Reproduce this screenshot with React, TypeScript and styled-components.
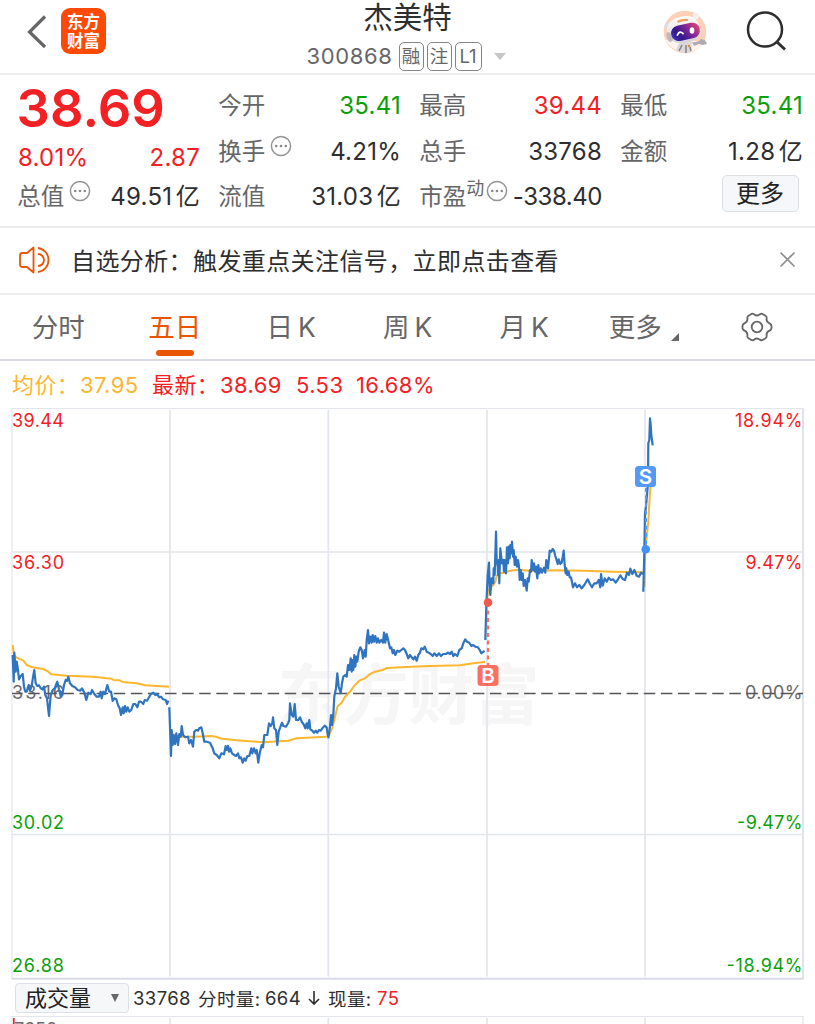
import React from "react";
import styled, { createGlobalStyle } from "styled-components";

const RED = "#f32024";
const GREEN = "#0aa00a";
const INK = "#2e2e30";
const GREY = "#666668";
const ORANGE = "#ea5504";
const LINE = "#2f74c0";
const AVG = "#fdb62f";
const GRID = "#e3e5ed";

const FONT = `Inter, "Noto Sans CJK SC", sans-serif`;

const Global = createGlobalStyle`
  * { box-sizing: border-box; }
  html, body { margin: 0; background: #fff; }
  body { font-family: ${FONT}; color: ${INK}; overflow: hidden; }
`;

const Page = styled.main`
  width: 815px;
  height: 1024px;
  overflow: hidden;
  display: flex;
  flex-direction: column;
  background: #fff;
`;

const Header = styled.header`
  height: 75px;
  flex: none;
  display: grid;
  grid-template-columns: 240px 1fr 240px;
  border-bottom: 2px solid #ededee;
`;

const HeaderLeft = styled.div`
  display: flex;
  align-items: flex-start;
  padding: 8px 0 0 26px;
  gap: 13px;
`;

const Logo = styled.div`
  width: 45px;
  height: 46px;
  border-radius: 9px;
  background: #ff4a03;
  color: #fff;
  font: 700 16.5px/19px "Noto Sans CJK SC", sans-serif;
  display: flex;
  flex-direction: column;
  align-items: center;
  justify-content: center;
`;

const Titles = styled.div`
  display: flex;
  flex-direction: column;
  align-items: center;
`;

const Title = styled.h1`
  margin: 0;
  font-size: 29.5px;
  line-height: 34px;
  font-weight: 400;
  height: 40px;
`;

const CodeRow = styled.div`
  display: flex;
  align-items: center;
  height: 32px;
  gap: 3px;
  margin-left: -3px;
  color: ${GREY};
`;

const Code = styled.span`
  font-size: 22px;
  letter-spacing: 0.65px;
  margin-right: 3px;
`;

const Badge = styled.span<{ $w?: number }>`
  width: ${(p) => p.$w ?? 25}px;
  height: 29px;
  border: 1.5px solid #858587;
  border-radius: 5px;
  font-size: 18.5px;
  line-height: 26px;
  text-align: center;
`;

const Caret = styled.span`
  border: 6.5px solid transparent;
  border-top: 7px solid #c6c6c8;
  border-bottom: 0;
  margin-left: 9px;
`;

const HeaderRight = styled.div`
  display: flex;
  justify-content: flex-end;
  align-items: flex-start;
  gap: 38px;
  padding: 9px 27px 0 0;
`;

const Quote = styled.section`
  height: 153px;
  flex: none;
  display: grid;
  grid-template-columns: repeat(4, 182px);
  column-gap: 19px;
  padding: 8px 0 0 18px;
  border-bottom: 2px solid #ededee;
`;

const Column = styled.div`
  display: flex;
  flex-direction: column;
`;

const Price = styled.div`
  height: 52px;
  margin-left: -1.5px;
  font-size: 52.5px;
  line-height: 51px;
  font-weight: 600;
  color: ${RED};
`;

const Row = styled.div<{ $h?: number }>`
  height: ${(p) => p.$h ?? 45.7}px;
  display: flex;
  align-items: center;
  justify-content: space-between;
  font-size: 24px;
  line-height: 36px;
  white-space: nowrap;
`;

const Label = styled.span`
  display: flex;
  color: ${GREY};
  font-size: 23.5px;
  margin-left: -0.7px;
`;

const Value = styled.span<{ $color?: string; $tracking?: number }>`
  color: ${(p) => p.$color ?? INK};
  letter-spacing: ${(p) => p.$tracking ?? 0.25}px;
`;

const Unit = styled.span`
  margin-left: 3.5px;
`;

const Super = styled.sup`
  font-size: 18px;
  line-height: 20px;
  margin-right: -3px;
`;

const MoreButton = styled.button`
  width: 77px;
  height: 37px;
  margin: 1px 4.5px 0 auto;
  padding: 0;
  border: 1.5px solid #dcdfe4;
  border-radius: 5px;
  background: #f6f7f9;
  font: 400 24px/34px ${FONT};
  color: #222;
`;

const Notice = styled.section`
  height: 67px;
  flex: none;
  display: flex;
  align-items: center;
  padding: 0 19px 2px 18px;
  border-bottom: 2px solid #ededee;
`;

const NoticeText = styled.span`
  flex: 1;
  margin-left: 20px;
  font: 400 24px/34px "Noto Sans CJK SC", sans-serif;
  letter-spacing: 0.4px;
`;

const Tabs = styled.nav`
  height: 66px;
  flex: none;
  display: grid;
  grid-template-columns: repeat(7, 116.5px);
  border-bottom: 2px solid #d8dbe3;
`;

const Tab = styled.div<{ $active?: boolean; $shift?: number }>`
  position: relative;
  display: flex;
  align-items: center;
  justify-content: center;
  gap: 5px;
  padding-left: ${(p) => p.$shift ?? 0}px;
  font-size: 26.5px;
  line-height: 36px;
  color: ${(p) => (p.$active ? ORANGE : GREY)};
  &::after {
    content: "";
    display: ${(p) => (p.$active ? "block" : "none")};
    position: absolute;
    bottom: 3px;
    width: 38px;
    height: 6px;
    border-radius: 3px;
    background: ${ORANGE};
  }
`;

const Corner = styled.i`
  align-self: flex-end;
  margin: 0 0 18px 4px;
  border-left: 8px solid transparent;
  border-bottom: 8px solid #666;
`;

const Legend = styled.div`
  height: 47px;
  flex: none;
  display: flex;
  align-items: center;
  padding-left: 12px;
`;

const LegendItem = styled.span<{ $w: number; $color: string }>`
  width: ${(p) => p.$w}px;
  color: ${(p) => p.$color};
  font-size: 22px;
  line-height: 32px;
  letter-spacing: 0.4px;
  white-space: nowrap;
`;

const Chart = styled.svg`
  display: block;
  flex: none;
  width: 815px;
  height: 572px;
`;

const VolumeBar = styled.div`
  height: 36px;
  flex: none;
  display: flex;
  align-items: center;
  padding-left: 15px;
  font-size: 18.5px;
  white-space: nowrap;
`;

const Picker = styled.button`
  width: 114px;
  height: 30px;
  border: 1.5px solid #dcdfe4;
  border-radius: 4px;
  background: #f6f7f9;
  display: flex;
  align-items: center;
  justify-content: space-between;
  padding: 0 9px;
  margin-right: 4px;
  font: 400 22px/26px ${FONT};
  color: #222;
`;

const PickerCaret = styled.i`
  border: 4.5px solid transparent;
  border-top: 8px solid #666;
  border-bottom: 0;
`;

const Stat = styled.span<{ $w: number; $color?: string }>`
  width: ${(p) => p.$w}px;
  color: ${(p) => p.$color ?? INK};
  letter-spacing: 0.4px;
`;

const ArrowDown = styled.svg`
  display: block;
  width: 14px;
  height: 16px;
  margin-right: 7px;
`;

const VolumeChart = styled.svg`
  display: block;
  flex: none;
  width: 815px;
  height: 8px;
`;

const DotsIcon = styled.svg`
  display: block;
  width: 22px;
  height: 22px;
  margin: 1px 0 0 5px;
`;

const Dots = () => (
  <DotsIcon viewBox="0 0 22 22">
    <circle cx="11" cy="11" r="9.600" fill="none" stroke="#949496" strokeWidth="1.500" />
    {[6.2, 11, 15.8].map((x) => (
      <circle key={x} cx={x} cy="11" r="1.300" fill="#8a8a8c" />
    ))}
  </DotsIcon>
);

const Robot = () => (
  <svg width="46" height="46" viewBox="0 0 46 46">
    <defs>
      <linearGradient id="visor" x1="0" x2="1" y1="0.6" y2="0.3">
        <stop offset="0" stopColor="#3a2fb0" />
        <stop offset="0.25" stopColor="#35168a" />
        <stop offset="0.6" stopColor="#7c2799" />
        <stop offset="1" stopColor="#e24572" />
      </linearGradient>
      <linearGradient id="shell" x1="0.4" x2="0.6" y1="0" y2="1">
        <stop offset="0" stopColor="#fffdfc" />
        <stop offset="1" stopColor="#d5d0d4" />
      </linearGradient>
    </defs>
    <circle cx="23" cy="23" r="21.300" fill="#fdd0b8" />
    <path d="M3 31Q10 42 23 44.300Q34 43 40 36L30 30H8Z" fill="#fff3ee" />
    <path d="M17 34L14 41Q21 46 29 43L30 33Z" fill="#dcd8d9" />
    <path d="M20 36L17 42M24 36V44M28 38L29 42" stroke="#86808a" strokeWidth="1.500" />
    <circle cx="27" cy="37" r="1.200" fill="#ea8a3c" />
    <path d="M30 33Q36 34 39 30L43 31L45 35L41 36L37 35L32 37Z" fill="#aeabb3" />
    <circle cx="6" cy="17" r="3.400" fill="#dfdadd" />
    <circle cx="34" cy="7" r="3.200" fill="#f3efee" />
    <path d="M5 24Q3 11 20 7.500Q33 5 37 15Q43 29 28 33Q10 38 5 24Z" fill="url(#shell)" />
    <ellipse cx="7.500" cy="28" rx="2.700" ry="5" transform="rotate(-20 7.500 28)" fill="#bdb8c0" />
    <path d="M15.500 13Q20 10.500 26 11" stroke="#eda057" strokeWidth="2.200" fill="none" />
    <rect x="9" y="15" width="29" height="15.500" rx="7.500" transform="rotate(-12 24 23)" fill="url(#visor)" />
    <path d="M15.500 26Q17.500 21 21 24.500" stroke="#fff" strokeWidth="1.800" fill="none" strokeLinecap="round" />
    <ellipse cx="30" cy="21.500" rx="2.300" ry="3.300" fill="#fff" />
  </svg>
);

type Origin = [number, number];

// Traces are stored at three units per pixel, relative to the origin of their session.
const trace = (points: string, [ox, oy]: Origin) =>
  points
    .trim()
    .split(/\s+/)
    .map((p) => {
      const [x, y] = p.split(",").map(Number);
      return `${(x / 3 + ox).toFixed(1)},${(y / 3 + oy).toFixed(1)}`;
    })
    .join(" ");

const priceTraces: [string, Origin][] = [
  [
    "38,105 41,185 43,98 47,155 50,125 54,150 57,178 62,168 68,162 72,200 76,215 80,215 86,195 90,212 95,198 99,172 103,150 107,190 112,198 117,196 122,205 127,208 132,200 136,225 141,235 147,288 152,225 158,210 164,205 168,195 172,185 177,208 182,228 187,225 192,195 197,180 201,183 205,170 210,190 217,198 225,202 233,210 241,212 246,205 253,218 259,240 265,218 272,222 276,210 283,222 290,230 297,230 302,215 305,235 310,215 315,222 322,195 328,215 333,215 338,243 343,235 349,238 354,255 359,265 363,285 368,262 371,280 375,258 379,275 383,262 388,275 394,270 400,252 406,252 412,262 417,245 423,245 430,252 434,240 441,242 447,232 453,222 460,218 466,225 471,222 478,232 483,230 489,238 497,240 501,252 505,242",
    [0, 620],
  ],
  [
    "28,262 33,408 35,330 38,375 41,345 45,372 49,340 54,375 58,342 62,350 65,318 69,345 76,352 84,350 88,370 93,360 99,380 103,335 108,330 114,332 118,325 124,322 128,340 133,365 140,365 150,368 158,385 163,400 170,405 178,415 184,400 192,403 197,378 200,390 204,378 207,395 211,385 216,400 223,405 228,408 234,400 238,415 243,412 248,428 253,415 257,422 262,408 268,408 274,385 277,400 282,385 287,400 290,390 295,428 299,400 305,375 309,382 313,345 318,345 322,345 327,310 332,318 337,310 339,292 343,325 348,330 352,375 356,335 362,318 366,308 370,318 378,320 385,308 388,300 390,250 395,285 400,290 404,252 408,300 415,300 420,292 425,305 432,315 436,325 440,310 443,325 448,300 451,328 457,332 462,338 467,332 472,338 477,330 482,332 487,325 494,317 500,322 504,350",
    [160, 620],
  ],
  [
    "25,415 30,380 33,345 36,375 40,345 43,290 48,265 52,220 56,260 62,280 66,250 70,230 76,225 80,230 84,195 88,210 92,175 95,215 98,180 100,210 103,165 106,200 109,170 112,185 116,155 121,142 125,150 129,175 134,150 137,170 140,120 144,90 147,130 151,110 155,128 158,105 162,125 166,108 170,128 174,115 178,128 184,120 189,128 192,98 196,128 200,102 205,122 210,145 214,142 218,160 222,150 226,165 232,152 238,155 244,150 250,145 255,150 260,162 265,175 270,165 275,172 280,178 285,170 290,182 295,165 300,158 304,145 310,148 314,140 320,155 326,158 332,162 338,168 343,160 350,168 357,160 363,168 370,162 378,162 384,158 390,162 395,155 400,168 405,162 412,168 418,150 425,145 430,130 436,118 441,125 448,128 454,138 460,135 466,140 474,142 479,150 484,160 490,155 494,153",
    [320, 600],
  ],
  [
    "46,420 49,322 50,290 53,225 57,188 59,260 61,285 65,235 70,250 71,205 74,225 78,95 80,180 83,200 84,225 86,180 88,250 91,145 96,190 100,180 102,215 104,180 108,220 111,142 114,190 116,140 119,175 121,135 124,160 126,125 129,170 131,150 134,195 137,170 141,200 144,180 147,200 149,240 152,210 155,240 158,220 161,258 165,240 170,272 173,235 176,245 180,210 183,215 185,180 189,210 192,190 195,215 198,200 202,235 205,195 208,220 212,205 216,218 222,203 226,218 229,180 234,205 239,152 244,155 248,147 252,152 256,168 263,192 266,178 271,192 275,188 281,152 284,195 287,220 289,205 292,225 296,215 299,232 303,232 309,262 315,250 321,262 328,255 335,265 343,255 353,238 360,252 366,262 373,250 380,250 386,240 391,262 393,222 398,257 404,235 410,245 416,233 423,240 430,238 437,248 444,238 451,226 458,237 465,240 471,218 477,225 481,206 487,222 493,210 500,227 507,230 513,218 519,222",
    [470, 500],
  ],
  ["130,575 133,460 135,340 138,320 144,250 145,130 148,120 150,55 152,75 154,105 158,136", [600, 400]],
];

const averageTraces: [string, Origin][] = [
  ["38,75 42,105 50,113 70,122 80,135 97,142 130,147 145,155 153,163 200,167 280,170 335,176 340,180 360,181 367,186 410,190 435,196 507,200", [0, 620]],
  ["35,342 60,350 100,350 155,348 170,351 185,356 230,361 310,367 385,362 410,355 500,350", [160, 620]],
  ["24,410 37,385 45,350 53,318 65,308 75,290 90,275 105,255 118,242 135,235 150,222 165,215 188,210 200,204 260,201 330,198 420,196 460,190 495,186", [320, 600]],
  ["51,310 54,275 60,265 70,255 76,245 80,228 90,220 105,218 120,212 145,209 185,213 250,211 340,212 430,215 520,217", [470, 500]],
  ["134,560 136,455 140,410 145,365 148,310 151,265 158,235", [600, 400]],
];

const axis: [number, string, string, number, string][] = [
  [427, "39.44", "18.94%", 67.5, RED],
  [569.3, "36.30", "9.47%", 57, RED],
  [699, "33.16", "0.00%", 57.5, "#69696b"],
  [829.3, "30.02", "-9.47%", 65.5, GREEN],
  [971.5, "26.88", "-18.94%", 76, GREEN],
];

const columns = [170, 328.3, 487, 645];

const Marker = ({ x, y, color, text }: { x: number; y: number; color: string; text: string }) => (
  <g>
    <rect x={x - 10.5} y={y - 10.5} width="21" height="21" rx="3.500" fill={color} />
    <text x={x} y={y + 7.2} textAnchor="middle" fontSize="20.500" fontWeight="600" fill="#fff" fontFamily="Inter">
      {text}
    </text>
  </g>
);

const PriceChart = () => (
  <Chart viewBox="0 408 815 572" fontFamily="Inter, sans-serif">
    <text x="277.500" y="718.500" fontSize="65.500" fontWeight="700" fill="#f6f6f6" fontFamily="'Noto Sans CJK SC', sans-serif">
      东方财富
    </text>
    <g stroke={GRID} fill="none">
      <path d="M11.500 408.500H803" strokeWidth="1.200" />
      <path d="M12 408.500V979" strokeWidth="1.200" />
      <path d="M803 408.500V979" strokeWidth="1.600" stroke="#d9dce4" />
      <path d="M11.500 978.800H804" strokeWidth="2" stroke="#d9dce4" />
      <path d="M12 552H803M12 834.500H803" strokeWidth="1.500" />
      {columns.map((x) => (
        <path key={x} d={`M${x} 410V976.500`} strokeWidth="1.700" />
      ))}
    </g>
    {axis.map(([y, left, right, width, color]) => (
      <g key={y} fill={color} fontSize="18">
        <text x="12" y={y} textLength="52">
          {left}
        </text>
        <text x={802.5 - width} y={y} textLength={width}>
          {right}
        </text>
      </g>
    ))}
    <path d="M12 693.500H803" stroke="#555557" strokeWidth="1.300" strokeDasharray="11.500 5.600" strokeDashoffset="0.900" />
    <g fill="none" strokeWidth="2.200" strokeLinejoin="round">
      {averageTraces.map(([p, o], i) => (
        <polyline key={i} points={trace(p, o)} stroke={AVG} strokeWidth="2" />
      ))}
      {priceTraces.map(([p, o], i) => (
        <polyline key={i} points={trace(p, o)} stroke={LINE} />
      ))}
    </g>
    <path d="M488 603V666" stroke="#fb7060" strokeWidth="2.200" strokeDasharray="4 3.500" />
    <circle cx="488" cy="602.500" r="4.300" fill="#f2594c" />
    <Marker x={488} y={675.5} color="#fb7060" text="B" />
    <path d="M646 488V548" stroke="#539af8" strokeWidth="2" strokeDasharray="4 3.500" />
    <circle cx="645.700" cy="549.300" r="4.300" fill="#4390f7" />
    <Marker x={645.5} y={476.5} color="#539af8" text="S" />
  </Chart>
);

export default function App() {
  return (
    <Page>
      <Global />
      <Header>
        <HeaderLeft>
          <svg width="22" height="46" viewBox="0 0 22 46">
            <path d="M19 8.500L3.500 24 19 39" fill="none" stroke="#666668" strokeWidth="3.200" />
          </svg>
          <Logo>
            <span>东方</span>
            <span>财富</span>
          </Logo>
        </HeaderLeft>
        <Titles>
          <Title>杰美特</Title>
          <CodeRow>
            <Code>300868</Code>
            <Badge>融</Badge>
            <Badge>注</Badge>
            <Badge $w={27}>L1</Badge>
            <Caret />
          </CodeRow>
        </Titles>
        <HeaderRight>
          <Robot />
          <svg width="42" height="44" viewBox="0 0 42 44">
            <circle cx="19" cy="20.500" r="17" fill="none" stroke="#2d2d2f" strokeWidth="2.500" />
            <path d="M30.500 32.500L39 40.500" stroke="#2d2d2f" strokeWidth="2.800" />
          </svg>
        </HeaderRight>
      </Header>

      <Quote>
        <Column>
          <Price>38.69</Price>
          <Row $h={45}>
            <Value $color={RED}>8.01%</Value>
            <Value $color={RED}>2.87</Value>
          </Row>
          <Row $h={34}>
            <Label>
              总值
              <Dots />
            </Label>
            <Value>
              49.51<Unit>亿</Unit>
            </Value>
          </Row>
        </Column>
        <Column>
          <Row>
            <Label>今开</Label>
            <Value $color={GREEN}>35.41</Value>
          </Row>
          <Row>
            <Label>
              换手
              <Dots />
            </Label>
            <Value>4.21%</Value>
          </Row>
          <Row>
            <Label>流值</Label>
            <Value>
              31.03<Unit>亿</Unit>
            </Value>
          </Row>
        </Column>
        <Column>
          <Row>
            <Label>最高</Label>
            <Value $color={RED}>39.44</Value>
          </Row>
          <Row>
            <Label>总手</Label>
            <Value>33768</Value>
          </Row>
          <Row>
            <Label>
              市盈<Super>动</Super>
              <Dots />
            </Label>
            <Value $tracking={-0.45}>-338.40</Value>
          </Row>
        </Column>
        <Column>
          <Row>
            <Label>最低</Label>
            <Value $color={GREEN}>35.41</Value>
          </Row>
          <Row>
            <Label>金额</Label>
            <Value>
              1.28<Unit>亿</Unit>
            </Value>
          </Row>
          <MoreButton>更多</MoreButton>
        </Column>
      </Quote>

      <Notice>
        <svg width="33" height="30" viewBox="0 0 33 30" fill="none" stroke={ORANGE} strokeWidth="1.800">
          <path d="M15.500 2.500V27.500L9 22H4.500Q2 22 2 19.500V10.500Q2 8 4.500 8H9Z" strokeLinejoin="round" />
          <path d="M20 9A6 6 0 0 1 20 21M20 3A12.100 12.100 0 0 1 20 27" />
        </svg>
        <NoticeText>自选分析：触发重点关注信号，立即点击查看</NoticeText>
        <svg width="17" height="17" viewBox="0 0 17 17" stroke="#8d8d8f" strokeWidth="1.700">
          <path d="M1.500 1.500L15.500 15.500M15.500 1.500L1.500 15.500" />
        </svg>
      </Notice>

      <Tabs>
        <Tab>分时</Tab>
        <Tab $active>五日</Tab>
        <Tab>
          <span>日</span>
          <span>K</span>
        </Tab>
        <Tab>
          <span>周</span>
          <span>K</span>
        </Tab>
        <Tab>
          <span>月</span>
          <span>K</span>
        </Tab>
        <Tab $shift={6}>
          更多
          <Corner />
        </Tab>
        <Tab>
          <svg width="32" height="30" viewBox="0 0 32 30" fill="none" stroke="#666668" strokeWidth="1.800" strokeLinejoin="round">
            <path d="M10 2.200Q11.500 1 13 2.300Q16 4.800 19 2.300Q20.500 1 22 2.200L24.500 3.700Q26 4.700 25.600 6.500Q25.200 10 28.600 11.400Q30.600 12.200 30.600 15Q30.600 17.800 28.600 18.600Q25.200 20 25.600 23.500Q26 25.300 24.500 26.300L22 27.800Q20.500 29 19 27.700Q16 25.200 13 27.700Q11.500 29 10 27.800L7.500 26.300Q6 25.300 6.400 23.500Q6.800 20 3.400 18.600Q1.400 17.800 1.400 15Q1.400 12.200 3.400 11.400Q6.800 10 6.400 6.500Q6 4.700 7.500 3.700Z" />
            <circle cx="16" cy="15" r="5.300" />
          </svg>
        </Tab>
      </Tabs>

      <Legend>
        <LegendItem $w={68} $color={AVG}>均价：</LegendItem>
        <LegendItem $w={72} $color={AVG}>37.95</LegendItem>
        <LegendItem $w={68} $color={RED}>最新：</LegendItem>
        <LegendItem $w={76} $color={RED}>38.69</LegendItem>
        <LegendItem $w={60} $color={RED}>5.53</LegendItem>
        <LegendItem $w={90} $color={RED}>16.68%</LegendItem>
      </Legend>

      <PriceChart />

      <VolumeBar>
        <Picker>
          成交量
          <PickerCaret />
        </Picker>
        <Stat $w={65}>33768</Stat>
        <Stat $w={67}>分时量:</Stat>
        <Stat $w={42}>664</Stat>
        <ArrowDown viewBox="0 0 14 16" fill="none" stroke={INK} strokeWidth="1.600">
          <path d="M7 1V14M2 9L7 14L12 9" />
        </ArrowDown>
        <Stat $w={49}>现量:</Stat>
        <Stat $w={30} $color={RED}>75</Stat>
      </VolumeBar>

      <VolumeChart viewBox="0 1016 815 8" fontFamily="Inter, sans-serif">
        <path d="M11.500 1016.300H804" stroke={GRID} strokeWidth="1.300" />
        <path d="M12 1016V1024M803 1016V1024" stroke={GRID} strokeWidth="1.300" />
        {columns.map((x) => (
          <path key={x} d={`M${x} 1018V1024`} stroke={GRID} strokeWidth="1.700" />
        ))}
        <path d="M13.800 1018V1024" stroke={RED} strokeWidth="1.700" />
        <text x="14" y="1035.500" fontSize="18" fill="#69696b">7650</text>
      </VolumeChart>
    </Page>
  );
}
